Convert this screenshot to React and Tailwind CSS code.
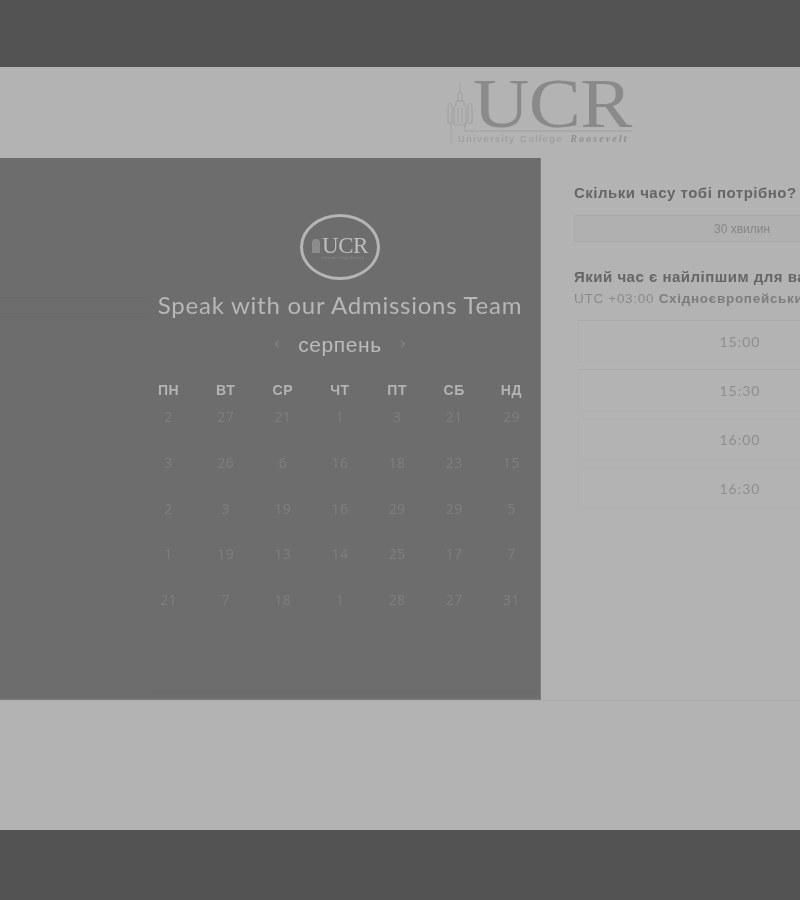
import { ChevronLeft, ChevronRight } from "lucide-react";

const DAYS = ["ПН","ВТ","СР","ЧТ","ПТ","СБ","НД"];
const NUMS = [
  [2,27,21,1,3,21,29],
  [3,26,6,16,18,23,15],
  [2,3,19,16,29,29,5],
  [1,19,13,14,25,17,7],
  [21,7,18,1,28,27,31],
];
const TIMES = ["15:00","15:30","16:00","16:30"];

function BigLogo() {
  return (
    <div className="relative w-[190px] h-[66px] shrink-0 blur-[0.5px]">
      <svg viewBox="0 0 190 66" className="absolute inset-0 w-[190px] h-[66px]" fill="none" stroke="#9c9c9c" strokeWidth="0.8">
        <path d="M14 2V12M12 12H16V20H12ZM10 20H18V24L20 27V44H8V27L10 24Z" />
        <path d="M2 26C2 21 6 21 6 26V42H2ZM22 26C22 21 26 21 26 26V42H22Z" />
        <path d="M12 27V42M16 27V42" />
        <path d="M5 42V63M19 42V50H186" />
      </svg>
      <div className="absolute left-[27px] top-[-12px] origin-left scale-x-[1.115] text-[#8a8a8a] text-[70px] leading-none tracking-[-0.5px] font-['Liberation_Serif',serif]">
        UCR
      </div>
      <div className="absolute left-[12px] top-[53px] whitespace-nowrap text-[9.5px] leading-none tracking-[1.6px] text-[#9a9a9a] font-['Liberation_Sans',sans-serif]">
        University College <span className="ml-[3px] italic font-bold tracking-[2.3px] font-['Liberation_Serif',serif] text-[#8e8e8e]">Roosevelt</span>
      </div>
    </div>
  );
}

function SmallLogo() {
  return (
    <div className="w-[80px] h-[66px] rounded-[50%] border-[3px] border-[#b5b5b5] flex items-center justify-center">
      <div className="flex flex-col items-center pt-[1px]">
        <div className="flex items-end text-[#bdbdbd] text-[23px] leading-none tracking-[-0.5px] font-['Liberation_Serif',serif]">
          <span className="w-[8px] h-[14px] bg-[#8c8c8c] mr-[2px] mb-[4px] rounded-t-sm"></span>
          UCR
        </div>
        <div className="text-[3.5px] leading-none text-[#8c8c8c] whitespace-nowrap pl-[6px] font-['Liberation_Serif',serif]">University College Roosevelt</div>
      </div>
    </div>
  );
}

export default function App() {
  return (
    <div className="w-[800px] h-[900px] overflow-hidden flex flex-col bg-[#535353] font-['Liberation_Sans',sans-serif]">
      <div className="h-[67px] shrink-0 bg-[#535353]"></div>

      <div className="h-[763px] shrink-0 bg-[#b3b3b3] flex flex-col">
        <div className="h-[91px] shrink-0 flex justify-start pl-[446px] pt-[14px]">
          <BigLogo />
        </div>

        <div className="h-[542px] shrink-0 flex">
          <div className="w-[541px] shrink-0 bg-[#6d6d6d] border-r border-b border-[#7d7d7d] flex flex-col items-end relative">
            <div className="absolute left-0 top-[139px] w-[150px] h-[20px] border-y border-[#6a6a6a]"></div>
            <div className="absolute right-0 bottom-[7px] w-[390px] border-t border-[#696969]"></div>
            <div className="w-[400px] flex flex-col items-center pt-[56px] blur-[0.5px]">
              <SmallLogo />
              <div className="mt-[8px] h-[34px] flex items-center text-[24px] leading-none tracking-[0.75px] whitespace-nowrap text-[#b7b7b7] font-['Lato',sans-serif]">
                Speak with our Admissions Team
              </div>
              <div className="mt-[9px] h-[26px] flex items-center gap-[15px]">
                <ChevronLeft size={12} strokeWidth={2} className="text-[#969696]" />
                <span className="text-[21px] leading-none tracking-[0.6px] text-[#bbbbbb]">серпень</span>
                <ChevronRight size={12} strokeWidth={2} className="text-[#969696]" />
              </div>
              <div className="w-full mt-[23px] grid grid-cols-7 h-[20px] items-center">
                {DAYS.map((d) => (
                  <div key={d} className="text-center text-[14px] leading-none font-bold tracking-[0.6px] text-[#b3b3b3]">{d}</div>
                ))}
              </div>
              <div className="w-full mt-[8px] grid grid-cols-7 auto-rows-[45.75px]">
                {NUMS.flat().map((n, i) => (
                  <div key={i} className="text-center text-[14px] leading-[18px] tracking-[0.4px] font-medium text-[#7f7f7f] font-['Open_Sans',sans-serif]">{n}</div>
                ))}
              </div>
            </div>
          </div>

          <div className="flex-1 min-w-0 overflow-hidden pl-[33px] pt-[26px]">
            <div className="w-[336px] blur-[0.4px]">
              <div className="text-[15px] leading-[18px] font-bold tracking-[0.5px] text-[#666666] whitespace-nowrap">Скільки часу тобі потрібно?</div>
              <div className="mt-[13px] h-[27px] rounded-[2px] border border-[#a8a8a8] bg-[#b0b0b0] flex items-center justify-center text-[12px] text-[#868686]">
                30 хвилин
              </div>
              <div className="mt-[26px] text-[15px] leading-[18px] font-bold tracking-[0.5px] text-[#666666] whitespace-nowrap">Який час є найліпшим для вас?</div>
              <div className="mt-[5px] text-[13.5px] leading-[16px] tracking-[0.7px] font-bold text-[#7d7d7d] whitespace-nowrap">
                <span className="font-normal text-[#8a8a8a]">UTC +03:00 </span>Східноєвропейський час
              </div>
              <div className="mt-[13px] ml-[4px] w-[324px] flex flex-col gap-[7px]">
                {TIMES.map((t, i) => (
                  <div key={t} className={`h-[42px] flex items-center justify-center text-[14px] tracking-[1px] text-[#8e8e8e] font-['Lato',sans-serif] border border-[#afafaf] ${i < 2 ? "border-t-[#a9a9a9]" : ""}`}>
                    {t}
                  </div>
                ))}
              </div>
            </div>
          </div>
        </div>

        <div className="flex-1 border-t border-[#ababab]"></div>
      </div>

      <div className="flex-1 bg-[#535353]"></div>
    </div>
  );
}
